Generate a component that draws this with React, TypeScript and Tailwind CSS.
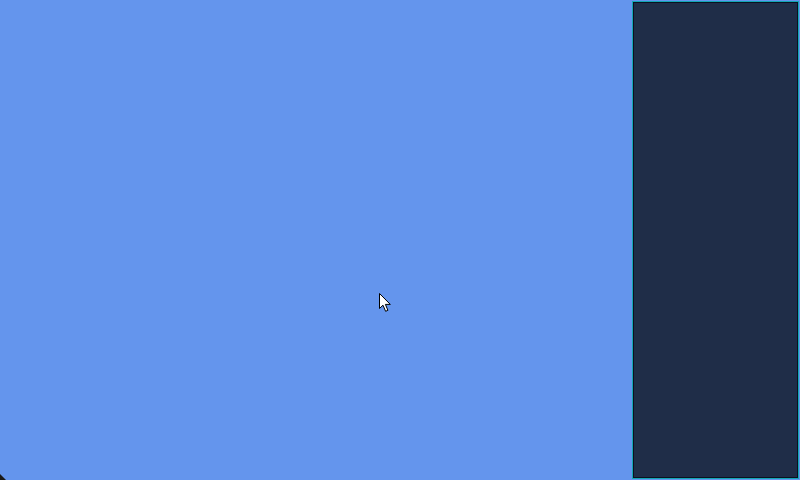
import React from "react";

export default function App() {
  return (
    <div className="relative flex h-[480px] w-[800px] overflow-hidden bg-[#6495ed]">
      <div className="flex-1 rounded-bl-[6px] bg-[#6495ed]" />
      <aside className="my-[1px] mr-[1px] w-[167px] border border-[#13a6b5] bg-[#1f2d48]">
        <div className="h-full w-full border border-[#0b1220] bg-[#1f2d48]" />
      </aside>
      <div className="pointer-events-none absolute left-0 bottom-0 h-[6px] w-[6px] bg-[#1a1a1a] [clip-path:polygon(0_0,0_100%,100%_100%)]" />
      <svg
        className="absolute left-[379px] top-[293px]"
        width="13"
        height="20"
        viewBox="0 0 13 20"
      >
        <path
          d="M0.5 0.5 L0.5 15.5 L4 12.2 L6.6 18.3 L8.9 17.3 L6.4 11.4 L11.3 11.4 Z"
          fill="#ffffff"
          stroke="#000000"
          strokeWidth="1"
          strokeLinejoin="miter"
        />
      </svg>
    </div>
  );
}
